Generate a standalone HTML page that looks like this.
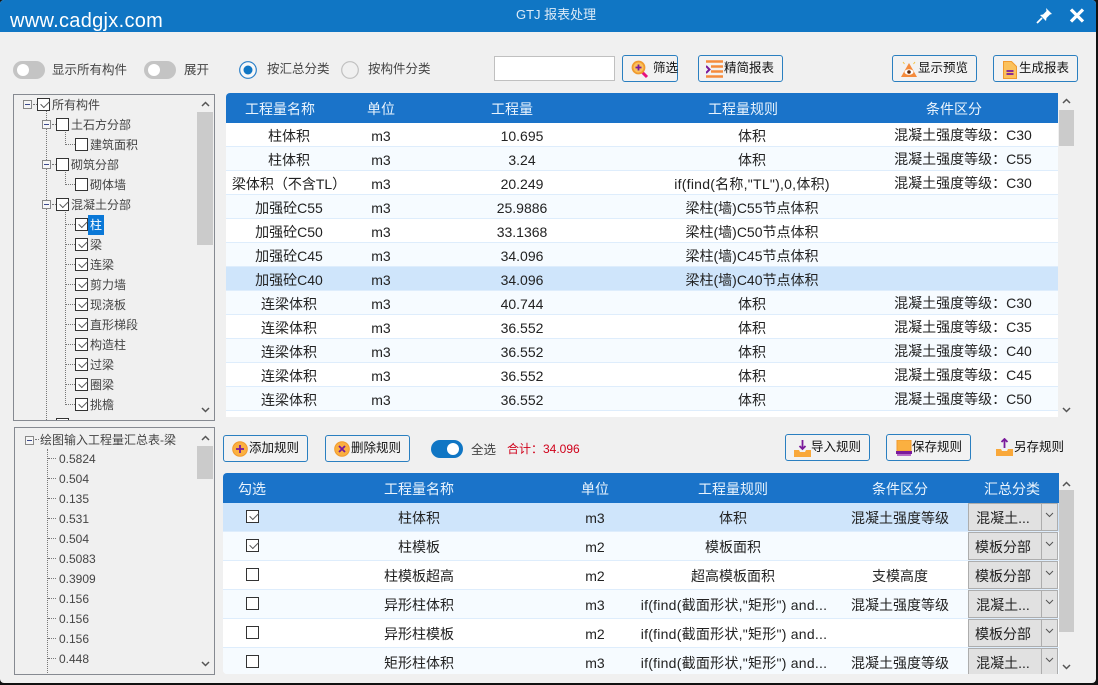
<!DOCTYPE html>
<html><head><meta charset="utf-8">
<style>
html,body{margin:0;padding:0;width:1098px;height:685px;overflow:hidden;background:#111;}
*{box-sizing:border-box;}
body{font-family:"Liberation Sans","Noto Sans CJK SC",sans-serif;font-size:12px;color:#333;}
#w{position:absolute;left:0;top:0;width:1096px;height:683px;background:#f0f0f0;border-radius:4px;overflow:hidden;}
.a{position:absolute;white-space:nowrap;}
.lab{position:absolute;white-space:nowrap;font-size:12.5px;line-height:16px;color:#444;}
.tr .lab{font-size:12px;margin-top:1px;}
.tg{position:absolute;width:32px;height:18px;border-radius:9px;background:#c4c4c4;}
.tg i{position:absolute;left:4px;top:3px;width:12px;height:12px;border-radius:50%;background:#fff;}
.tg.on{background:#1076c4;}.tg.on i{left:16px;}
.btn{position:absolute;height:27px;border:1px solid #2a7fc0;border-radius:3px;background:#f2f2f2;font-size:12.5px;line-height:24px;color:#111;white-space:nowrap;}
.btn svg{position:absolute;}
.btn span{position:absolute;top:0;}
.tb{position:absolute;overflow:hidden;background:#fff;}
.h{position:absolute;left:0;right:0;top:0;height:30px;background:#1a73c9;color:#eaf4fd;font-size:14px;line-height:30px;}
.h span{position:absolute;transform:translateX(-50%);white-space:nowrap;top:1px;}
.r{position:absolute;left:0;right:0;font-size:14px;color:#222;border-bottom:1px solid #deedfc;background:#fff;}
.r.o{background:#f6fbff;}
.r.s{background:#cfe5fb;}
.r span{position:absolute;transform:translateX(-50%);white-space:nowrap;top:2px;}
.t1 .r{height:24px;line-height:23px;}
.t1 .r span.k{top:1px;}
.t2 .r{height:29px;line-height:29px;}
.t2 .r span{top:1px;}
.ls{letter-spacing:.25px;}
.ck{position:absolute;width:13px;height:13px;border:1px solid #333;background:#fff;}
.ck.y:after{content:"";position:absolute;left:2px;top:1px;width:8px;height:4px;border-left:1.4px solid #555;border-bottom:1.4px solid #555;transform:rotate(-45deg) translate(0,1px);}
.tr{position:absolute;border:1px solid #868a91;overflow:hidden;background:#f0f0f0;}
.mn{position:absolute;width:9px;height:9px;border:1px solid #888;background:#f6f6f6;}
.mn:after{content:"";position:absolute;left:1px;top:3px;width:5px;height:1px;background:#3c4a8c;}
.dv{position:absolute;width:0;border-left:1px dotted #777;}
.dh{position:absolute;height:0;border-top:1px dotted #777;}
.sb{position:absolute;background:#f0f0f0;}
.th{position:absolute;background:#cbcbcb;}
.cb{position:absolute;left:745px;width:90px;height:28px;background:#e1e1e1;border:1px solid #adadad;font-size:14px;line-height:26px;color:#222;}
.cb b{position:absolute;left:72px;top:-1px;height:28px;width:1px;background:#adadad;}
.cb em{position:absolute;left:0;width:68px;text-align:center;font-style:normal;top:1px;}
.cb svg{position:absolute;left:76px;top:8px;}
</style></head><body><div id="w">
<div class="a" style="left:0;top:0;width:1098px;height:32px;background:#1076c4;"></div>
<div class="a" style="left:10px;top:7px;font-size:20px;line-height:28px;color:#fff;letter-spacing:.3px;">www.cadgjx.com</div>
<div class="a" style="left:516px;top:7px;font-size:13px;line-height:16px;color:#dcebf8;">GTJ 报表处理</div>
<svg class="a" style="left:1035px;top:7px;" width="18" height="18" viewBox="0 0 18 18"><path d="M11 1l6 6-2 .5-3.500 3.500-.5 3-6-6 3-.5L11.500 4z" fill="#fff"/><path d="M7 11L2 16" stroke="#fff" stroke-width="1.800"/></svg>
<svg class="a" style="left:1069px;top:8px;" width="16" height="15" viewBox="0 0 16 15"><path d="M2 1.500L14 13.500M14 1.500L2 13.500" stroke="#fff" stroke-width="3.200"/></svg>

<div class="tg" style="left:13px;top:61px;"><i></i></div>
<div class="lab" style="left:52px;top:62px;">显示所有构件</div>
<div class="tg" style="left:144px;top:61px;"><i></i></div>
<div class="lab" style="left:184px;top:62px;">展开</div>
<svg class="a" style="left:239px;top:61px;" width="18" height="18"><circle cx="9" cy="9" r="8.300" fill="#f8f8f8" stroke="#2a7fc8" stroke-width="1.200"/><circle cx="9" cy="9" r="4.500" fill="#1076c4"/></svg>
<div class="lab" style="left:267px;top:61px;">按汇总分类</div>
<svg class="a" style="left:341px;top:61px;" width="18" height="18"><circle cx="9" cy="9" r="8.300" fill="#f0f0f0" stroke="#c0c0c0" stroke-width="1.200"/></svg>
<div class="lab" style="left:368px;top:61px;">按构件分类</div>
<div class="a" style="left:494px;top:56px;width:121px;height:25px;background:#fff;border:1px solid #c0c0c0;"></div>

<div class="btn" style="left:622px;top:55px;width:56px;">
<svg style="left:8px;top:4px" width="18" height="19" viewBox="0 0 18 19"><path d="M10 11l6 6" stroke="#e8127c" stroke-width="3"/><circle cx="7.500" cy="7.500" r="6" fill="#fbc15c" stroke="#f19a2e" stroke-width="1.800"/><path d="M4.500 7.500h6M7.500 4.500v6" stroke="#7a1a9b" stroke-width="1.800"/></svg>
<span style="left:30px;">筛选</span></div>
<div class="btn" style="left:698px;top:55px;width:85px;">
<svg style="left:7px;top:4px" width="18" height="19" viewBox="0 0 18 19"><path d="M0 1.500h17M5 6.500h12M5 11.500h12M0 16.500h17" stroke="#f58b3c" stroke-width="2.400"/><path d="M0 6l3.500 3.500L0 13" fill="none" stroke="#7a1a9b" stroke-width="2"/></svg>
<span style="left:25px;">精简报表</span></div>
<div class="btn" style="left:892px;top:55px;width:85px;">
<svg style="left:7px;top:4px" width="18" height="19" viewBox="0 0 18 19"><path d="M9 3L17 17H1z" fill="#f58b3c"/><ellipse cx="9" cy="12" rx="4.500" ry="2.800" fill="#fff"/><circle cx="9" cy="12" r="1.800" fill="#5a2a10"/><path d="M3 2l1.500 2M15 2l-1.500 2" stroke="#f5c23c" stroke-width="1"/></svg>
<span style="left:25px;">显示预览</span></div>
<div class="btn" style="left:993px;top:55px;width:85px;">
<svg style="left:9px;top:5px" width="14" height="18" viewBox="0 0 14 18"><path d="M.5.500h8l5 5v12H.500z" fill="#fbc15c" stroke="#f19a2e"/><path d="M3.500 10h7M3.500 13h7" stroke="#7a1a9b" stroke-width="1.800"/></svg>
<span style="left:25px;">生成报表</span></div>

<!-- tree 1 -->
<div class="tr" style="left:13px;top:94px;width:202px;height:327px;">
<div class="dv" style="left:32px;top:15px;height:312px;"></div>
<div class="dv" style="left:51px;top:35px;height:15px;"></div>
<div class="dv" style="left:51px;top:75px;height:15px;"></div>
<div class="dv" style="left:51px;top:115px;height:195px;"></div>
<div class="dh" style="left:19px;top:9px;width:4px;"></div>
<div class="dh" style="left:38px;top:29px;width:4px;"></div>
<div class="dh" style="left:52px;top:49px;width:9px;"></div>
<div class="dh" style="left:38px;top:69px;width:4px;"></div>
<div class="dh" style="left:52px;top:89px;width:9px;"></div>
<div class="dh" style="left:38px;top:109px;width:4px;"></div>
<div class="dh" style="left:52px;top:129px;width:9px;"></div>
<div class="dh" style="left:52px;top:149px;width:9px;"></div>
<div class="dh" style="left:52px;top:169px;width:9px;"></div>
<div class="dh" style="left:52px;top:189px;width:9px;"></div>
<div class="dh" style="left:52px;top:209px;width:9px;"></div>
<div class="dh" style="left:52px;top:229px;width:9px;"></div>
<div class="dh" style="left:52px;top:249px;width:9px;"></div>
<div class="dh" style="left:52px;top:269px;width:9px;"></div>
<div class="dh" style="left:52px;top:289px;width:9px;"></div>
<div class="dh" style="left:52px;top:309px;width:9px;"></div>
<div class="mn" style="left:9px;top:5px;"></div><div class="ck y" style="left:23px;top:3px;"></div><div class="lab" style="left:38px;top:1px;">所有构件</div>
<div class="mn" style="left:28px;top:25px;"></div><div class="ck" style="left:42px;top:23px;"></div><div class="lab" style="left:57px;top:21px;">土石方分部</div>
<div class="ck" style="left:61px;top:43px;"></div><div class="lab" style="left:76px;top:41px;">建筑面积</div>
<div class="mn" style="left:28px;top:65px;"></div><div class="ck" style="left:42px;top:63px;"></div><div class="lab" style="left:57px;top:61px;">砌筑分部</div>
<div class="ck" style="left:61px;top:83px;"></div><div class="lab" style="left:76px;top:81px;">砌体墙</div>
<div class="mn" style="left:28px;top:105px;"></div><div class="ck y" style="left:42px;top:103px;"></div><div class="lab" style="left:57px;top:101px;">混凝土分部</div>
<div class="ck y" style="left:61px;top:123px;"></div><div class="a" style="left:74px;top:120px;width:16px;height:20px;background:#0a78d7;color:#fff;line-height:20px;text-align:center;">柱</div>
<div class="ck y" style="left:61px;top:143px;"></div><div class="lab" style="left:76px;top:141px;">梁</div>
<div class="ck y" style="left:61px;top:163px;"></div><div class="lab" style="left:76px;top:161px;">连梁</div>
<div class="ck y" style="left:61px;top:183px;"></div><div class="lab" style="left:76px;top:181px;">剪力墙</div>
<div class="ck y" style="left:61px;top:203px;"></div><div class="lab" style="left:76px;top:201px;">现浇板</div>
<div class="ck y" style="left:61px;top:223px;"></div><div class="lab" style="left:76px;top:221px;">直形梯段</div>
<div class="ck y" style="left:61px;top:243px;"></div><div class="lab" style="left:76px;top:241px;">构造柱</div>
<div class="ck y" style="left:61px;top:263px;"></div><div class="lab" style="left:76px;top:261px;">过梁</div>
<div class="ck y" style="left:61px;top:283px;"></div><div class="lab" style="left:76px;top:281px;">圈梁</div>
<div class="ck y" style="left:61px;top:303px;"></div><div class="lab" style="left:76px;top:301px;">挑檐</div>
<div class="ck" style="left:42px;top:323px;"></div>
<div class="sb" style="left:183px;top:0;width:17px;height:325px;"></div>
<div class="th" style="left:183px;top:17px;width:16px;height:133px;"></div>
<svg class="a" style="left:187px;top:6px;" width="9" height="6"><path d="M1 5l3.500-3.500L8 5" fill="none" stroke="#555" stroke-width="1.500"/></svg>
<svg class="a" style="left:187px;top:312px;" width="9" height="6"><path d="M1 1l3.500 3.500L8 1" fill="none" stroke="#555" stroke-width="1.500"/></svg>
</div>

<!-- tree 2 -->
<div class="tr" style="left:14px;top:427px;width:201px;height:248px;">
<div class="dv" style="left:32px;top:21px;height:226px;"></div>
<div class="dh" style="left:20px;top:11px;width:4px;"></div>
<div class="mn" style="left:10px;top:8px;"></div>
<div class="lab" style="left:25px;top:3px;">绘图输入工程量汇总表-梁</div>
<div class="dh" style="left:33px;top:30px;width:8px;"></div><div class="lab" style="left:44px;top:22px;">0.5824</div>
<div class="dh" style="left:33px;top:50px;width:8px;"></div><div class="lab" style="left:44px;top:42px;">0.504</div>
<div class="dh" style="left:33px;top:70px;width:8px;"></div><div class="lab" style="left:44px;top:62px;">0.135</div>
<div class="dh" style="left:33px;top:90px;width:8px;"></div><div class="lab" style="left:44px;top:82px;">0.531</div>
<div class="dh" style="left:33px;top:110px;width:8px;"></div><div class="lab" style="left:44px;top:102px;">0.504</div>
<div class="dh" style="left:33px;top:130px;width:8px;"></div><div class="lab" style="left:44px;top:122px;">0.5083</div>
<div class="dh" style="left:33px;top:150px;width:8px;"></div><div class="lab" style="left:44px;top:142px;">0.3909</div>
<div class="dh" style="left:33px;top:170px;width:8px;"></div><div class="lab" style="left:44px;top:162px;">0.156</div>
<div class="dh" style="left:33px;top:190px;width:8px;"></div><div class="lab" style="left:44px;top:182px;">0.156</div>
<div class="dh" style="left:33px;top:210px;width:8px;"></div><div class="lab" style="left:44px;top:202px;">0.156</div>
<div class="dh" style="left:33px;top:230px;width:8px;"></div><div class="lab" style="left:44px;top:222px;">0.448</div>
<div class="th" style="left:182px;top:18px;width:16px;height:33px;"></div>
<svg class="a" style="left:186px;top:7px;" width="9" height="6"><path d="M1 5l3.500-3.500L8 5" fill="none" stroke="#555" stroke-width="1.500"/></svg>
<svg class="a" style="left:186px;top:233px;" width="9" height="6"><path d="M1 1l3.500 3.500L8 1" fill="none" stroke="#555" stroke-width="1.500"/></svg>
</div>

<!-- top table -->
<div class="tb t1" style="left:226px;top:93px;width:832px;height:324px;border-radius:4px 0 0 0;">
<div class="h"><span style="left:54px;">工程量名称</span><span style="left:155px;">单位</span><span style="left:286px;">工程量</span><span style="left:517px;">工程量规则</span><span style="left:728px;">条件区分</span></div>
<div class="r" style="top:30px;"><span style="left:63px;">柱体积</span><span style="left:155px;">m3</span><span style="left:296px;">10.695</span><span style="left:526px;">体积</span><span class="k" style="left:737px;">混凝土强度等级：C30</span></div>
<div class="r o" style="top:54px;"><span style="left:63px;">柱体积</span><span style="left:155px;">m3</span><span style="left:296px;">3.24</span><span style="left:526px;">体积</span><span class="k" style="left:737px;">混凝土强度等级：C55</span></div>
<div class="r" style="top:78px;"><span style="left:63px;">梁体积（不含TL）</span><span style="left:155px;">m3</span><span style="left:296px;">20.249</span><span class="ls" style="left:526px;">if(find(名称,"TL"),0,体积)</span><span class="k" style="left:737px;">混凝土强度等级：C30</span></div>
<div class="r o" style="top:102px;"><span style="left:63px;">加强砼C55</span><span style="left:155px;">m3</span><span style="left:296px;">25.9886</span><span style="left:526px;">梁柱(墙)C55节点体积</span></div>
<div class="r" style="top:126px;"><span style="left:63px;">加强砼C50</span><span style="left:155px;">m3</span><span style="left:296px;">33.1368</span><span style="left:526px;">梁柱(墙)C50节点体积</span></div>
<div class="r o" style="top:150px;"><span style="left:63px;">加强砼C45</span><span style="left:155px;">m3</span><span style="left:296px;">34.096</span><span style="left:526px;">梁柱(墙)C45节点体积</span></div>
<div class="r s" style="top:174px;"><span style="left:63px;">加强砼C40</span><span style="left:155px;">m3</span><span style="left:296px;">34.096</span><span style="left:526px;">梁柱(墙)C40节点体积</span></div>
<div class="r o" style="top:198px;"><span style="left:63px;">连梁体积</span><span style="left:155px;">m3</span><span style="left:296px;">40.744</span><span style="left:526px;">体积</span><span class="k" style="left:737px;">混凝土强度等级：C30</span></div>
<div class="r" style="top:222px;"><span style="left:63px;">连梁体积</span><span style="left:155px;">m3</span><span style="left:296px;">36.552</span><span style="left:526px;">体积</span><span class="k" style="left:737px;">混凝土强度等级：C35</span></div>
<div class="r o" style="top:246px;"><span style="left:63px;">连梁体积</span><span style="left:155px;">m3</span><span style="left:296px;">36.552</span><span style="left:526px;">体积</span><span class="k" style="left:737px;">混凝土强度等级：C40</span></div>
<div class="r" style="top:270px;"><span style="left:63px;">连梁体积</span><span style="left:155px;">m3</span><span style="left:296px;">36.552</span><span style="left:526px;">体积</span><span class="k" style="left:737px;">混凝土强度等级：C45</span></div>
<div class="r o" style="top:294px;"><span style="left:63px;">连梁体积</span><span style="left:155px;">m3</span><span style="left:296px;">36.552</span><span style="left:526px;">体积</span><span class="k" style="left:737px;">混凝土强度等级：C50</span></div>
</div>
<div class="th" style="left:1059px;top:110px;width:15px;height:36px;"></div>
<svg class="a" style="left:1062px;top:98px;" width="9" height="6"><path d="M1 5l3.500-3.500L8 5" fill="none" stroke="#555" stroke-width="1.500"/></svg>
<svg class="a" style="left:1062px;top:407px;" width="9" height="6"><path d="M1 1l3.500 3.500L8 1" fill="none" stroke="#555" stroke-width="1.500"/></svg>

<!-- bottom toolbar -->
<div class="btn" style="left:223px;top:435px;width:85px;">
<svg style="left:8px;top:5px" width="16" height="16"><circle cx="8" cy="8" r="7.300" fill="#fbb040" stroke="#f19a2e"/><path d="M4 8h8M8 4v8" stroke="#7a1a9b" stroke-width="1.800"/></svg>
<span style="left:25px;">添加规则</span></div>
<div class="btn" style="left:325px;top:435px;width:85px;">
<svg style="left:8px;top:5px" width="16" height="16"><circle cx="8" cy="8" r="7.300" fill="#fbb040" stroke="#f19a2e"/><path d="M5 5l6 6M11 5l-6 6" stroke="#7a1a9b" stroke-width="1.800"/></svg>
<span style="left:25px;">删除规则</span></div>
<div class="tg on" style="left:431px;top:440px;"><i></i></div>
<div class="lab" style="left:471px;top:442px;">全选</div>
<div class="a" style="left:507px;top:441px;font-size:12px;line-height:16px;color:#d0021b;">合计：34.096</div>
<div class="btn" style="left:785px;top:434px;width:85px;">
<svg style="left:8px;top:4px" width="17" height="19" viewBox="0 0 17 19"><path d="M0 11h5l1 2h5l1-2h5v7H0z" fill="#f9a83a"/><path d="M8.500 1v9M5.500 7l3 3 3-3" fill="none" stroke="#7a1a9b" stroke-width="1.800"/></svg>
<span style="left:25px;">导入规则</span></div>
<div class="btn" style="left:886px;top:434px;width:85px;">
<svg style="left:8px;top:5px" width="18" height="17" viewBox="0 0 18 17"><rect x="2" y="0" width="14" height="11" fill="#fbb040" stroke="#f19a2e"/><rect x="1" y="11" width="16" height="3" fill="#7a1a9b"/><rect x="2" y="14" width="14" height="2" fill="#b56ac9"/></svg>
<span style="left:25px;">保存规则</span></div>
<svg class="a" style="left:996px;top:438px;" width="17" height="19" viewBox="0 0 17 19"><path d="M0 11h5l1 2h5l1-2h5v7H0z" fill="#f9a83a"/><path d="M8.500 10V1M5.500 4l3-3 3 3" fill="none" stroke="#7a1a9b" stroke-width="1.800"/></svg>
<div class="a" style="left:1014px;top:439px;font-size:12.5px;line-height:16px;color:#111;">另存规则</div>

<!-- bottom table -->
<div class="tb t2" style="left:223px;top:473px;width:836px;height:201px;border-radius:4px 0 0 4px;">
<div class="h"><span style="left:29px;">勾选</span><span style="left:196px;">工程量名称</span><span style="left:372px;">单位</span><span style="left:510px;">工程量规则</span><span style="left:677px;">条件区分</span><span style="left:789px;">汇总分类</span></div>
<div class="r s" style="top:30px;"><div class="ck y" style="left:23px;top:7px;"></div><span style="left:196px;">柱体积</span><span style="left:372px;">m3</span><span style="left:510px;">体积</span><span style="left:677px;">混凝土强度等级</span></div>
<div class="r o" style="top:59px;"><div class="ck y" style="left:23px;top:7px;"></div><span style="left:196px;">柱模板</span><span style="left:372px;">m2</span><span style="left:510px;">模板面积</span></div>
<div class="r" style="top:88px;"><div class="ck" style="left:23px;top:7px;"></div><span style="left:196px;">柱模板超高</span><span style="left:372px;">m2</span><span style="left:510px;">超高模板面积</span><span style="left:677px;">支模高度</span></div>
<div class="r o" style="top:117px;"><div class="ck" style="left:23px;top:7px;"></div><span style="left:196px;">异形柱体积</span><span style="left:372px;">m3</span><span class="ls" style="left:511px;">if(find(截面形状,"矩形") and...</span><span style="left:677px;">混凝土强度等级</span></div>
<div class="r" style="top:146px;"><div class="ck" style="left:23px;top:7px;"></div><span style="left:196px;">异形柱模板</span><span style="left:372px;">m2</span><span class="ls" style="left:511px;">if(find(截面形状,"矩形") and...</span></div>
<div class="r o" style="top:175px;"><div class="ck" style="left:23px;top:7px;"></div><span style="left:196px;">矩形柱体积</span><span style="left:372px;">m3</span><span class="ls" style="left:511px;">if(find(截面形状,"矩形") and...</span><span style="left:677px;">混凝土强度等级</span></div>
<div class="cb" style="top:30px;"><em>混凝土...</em><b></b><svg width="9" height="6"><path d="M1 1l3.500 3.500L8 1" fill="none" stroke="#555"/></svg></div>
<div class="cb" style="top:59px;"><em>模板分部</em><b></b><svg width="9" height="6"><path d="M1 1l3.500 3.500L8 1" fill="none" stroke="#555"/></svg></div>
<div class="cb" style="top:88px;"><em>模板分部</em><b></b><svg width="9" height="6"><path d="M1 1l3.500 3.500L8 1" fill="none" stroke="#555"/></svg></div>
<div class="cb" style="top:117px;"><em>混凝土...</em><b></b><svg width="9" height="6"><path d="M1 1l3.500 3.500L8 1" fill="none" stroke="#555"/></svg></div>
<div class="cb" style="top:146px;"><em>模板分部</em><b></b><svg width="9" height="6"><path d="M1 1l3.500 3.500L8 1" fill="none" stroke="#555"/></svg></div>
<div class="cb" style="top:175px;"><em>混凝土...</em><b></b><svg width="9" height="6"><path d="M1 1l3.500 3.500L8 1" fill="none" stroke="#555"/></svg></div>
</div>
<div class="th" style="left:1059px;top:490px;width:15px;height:142px;"></div>
<svg class="a" style="left:1062px;top:481px;" width="9" height="6"><path d="M1 5l3.500-3.500L8 5" fill="none" stroke="#555" stroke-width="1.500"/></svg>
<svg class="a" style="left:1062px;top:664px;" width="9" height="6"><path d="M1 1l3.500 3.500L8 1" fill="none" stroke="#555" stroke-width="1.500"/></svg>
</div></body></html>
